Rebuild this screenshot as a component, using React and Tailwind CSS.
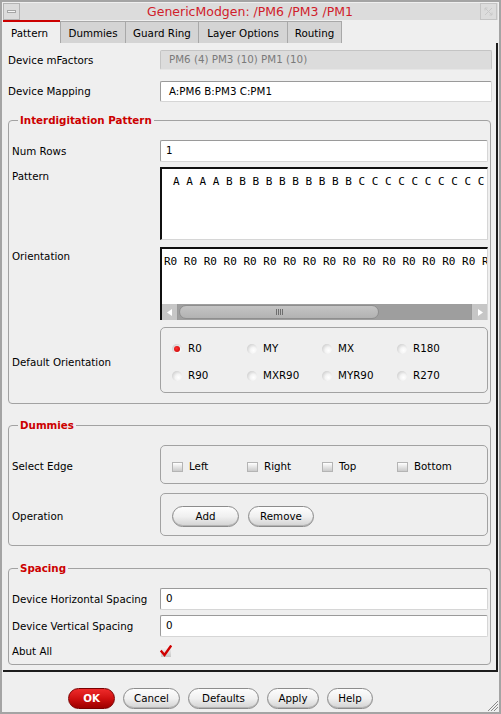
import React from "react";

function Radio({ label, checked }) {
  return (
    <div className="flex items-center gap-[6px] h-[14px]">
      <span className="w-[10px] h-[10px] rounded-full flex items-center justify-center bg-[radial-gradient(circle_at_65%_65%,#ffffff_0%,#f4f4f4_35%,#bdbdbd_100%)]">
        {checked && <span className="w-[6px] h-[6px] rounded-full bg-[radial-gradient(circle_at_40%_40%,#ff3030_0%,#c00000_100%)]" />}
      </span>
      <span>{label}</span>
    </div>
  );
}

function Check({ label }) {
  return (
    <div className="flex items-center gap-[6px] h-[14px]">
      <span className="w-[11px] h-[10px] border border-[#b4b4b4] bg-linear-to-b from-[#ffffff] to-[#cacaca]" />
      <span>{label}</span>
    </div>
  );
}

function Field({ children, w, pl }) {
  return (
    <div className={"h-[22px] bg-white border border-[#9a9a9a] border-r-[#d6d6d6] border-b-[#d6d6d6] rounded-[2px] flex items-center " + w + " " + pl}>
      {children}
    </div>
  );
}

function Btn({ children, w }) {
  return (
    <button className={"h-[21px] rounded-full border border-[#8c8c8c] bg-linear-to-b from-[#fdfdfd] via-[#f0f0f0] to-[#d2d2d2] shadow-[inset_0_-1px_0_#b4b4b4] text-black leading-none " + w}>
      {children}
    </button>
  );
}

export default function App() {
  const orient = Array.from({ length: 16 }, () => "R0").join(" ") + " R";
  const pattern = "A A A A B B B B B B B B B B C C C C C C C C C C";
  return (
    <div className="w-[501px] h-[714px] bg-[#efefef] border-2 border-[#a4a4a4] p-[1px] flex flex-col font-['DejaVu_Sans',sans-serif] text-[10.3px] text-black overflow-hidden">
      {/* Title bar */}
      <div className="h-[17px] flex bg-[#dcdcdc] shrink-0">
        <div className="w-[17px] h-[17px] border border-[#b4b4b4] flex items-center justify-center">
          <div className="w-[9px] h-[3px] bg-[#f6f6f6] border border-[#a6a6a6]" />
        </div>
        <div className="flex-1 text-center text-[12.5px] leading-[17px] text-[#d0202a]">GenericModgen: /PM6 /PM3 /PM1</div>
        <div className="w-[17px] h-[17px] border border-[#c4c4c4] flex items-center justify-center mr-[1px]">
          <svg width="9" height="9" viewBox="0 0 9 9" fill="none" stroke="#c8c8c8" strokeWidth="1">
            <path d="M1 1 L8 8 M8 1 L1 8 M1 1 L3.5 1 M1 1 L1 3.5 M8 8 L5.5 8 M8 8 L8 5.5" />
          </svg>
        </div>
      </div>

      {/* Tabs */}
      <div className="h-[23px] flex items-end shrink-0">
        <div className="w-[57px] h-[23px] border-t-2 border-[#cc0000] bg-[#efefef] pl-[8px] pt-[2px] flex items-center">Pattern</div>
        <div className="w-[66px] h-[22px] bg-[#d4d4d4] border-l border-t border-r border-[#a8a8a8] pt-[2px] flex items-center justify-center">Dummies</div>
        <div className="w-[73px] h-[22px] bg-[#d4d4d4] border-t border-r border-[#a8a8a8] pt-[2px] flex items-center justify-center">Guard Ring</div>
        <div className="w-[89px] h-[22px] bg-[#d4d4d4] border-t border-r border-[#a8a8a8] pt-[2px] flex items-center justify-center">Layer Options</div>
        <div className="w-[54px] h-[22px] bg-[#d4d4d4] border-t border-r border-[#a8a8a8] pt-[2px] flex items-center justify-center">Routing</div>
      </div>

      {/* Content panel */}
      <div className="h-[629px] shrink-0 border-r-2 border-b-2 border-[#1c1c1c] flex flex-col">
        <div className="flex items-center pl-[5px] pr-[3px] mt-[7px]">
          <div className="w-[152px] pt-[1px]">Device mFactors</div>
          <div className="h-[20px] w-[332px] bg-[#dcdcdc] border border-[#c4c4c4] border-b-[#e6e6e6] rounded-[2px] pl-[8px] flex items-center text-[#7a7a7a]">PM6 (4) PM3 (10) PM1 (10)</div>
        </div>
        <div className="flex items-center pl-[5px] pr-[3px] mt-[11px]">
          <div className="w-[152px] pt-[1px]">Device Mapping</div>
          <div className="h-[21px] w-[332px] bg-white border border-[#9a9a9a] border-r-[#d6d6d6] border-b-[#d6d6d6] rounded-[2px] pl-[8px] flex items-center">A:PM6 B:PM3 C:PM1</div>
        </div>

        {/* Interdigitation Pattern */}
        <fieldset className="mx-[5px] mt-[11px] border border-[#a2a2a2] rounded-[4px] pl-[3px] pr-[1px] pb-[10px]">
          <legend className="ml-[6px] px-[2px] leading-[14px] text-[#cc0000] font-bold">Interdigitation Pattern</legend>
          <div className="flex items-center mt-[13px]">
            <div className="w-[148px] pt-[1px]">Num Rows</div>
            <Field w="w-[328px]" pl="pl-[5px]">1</Field>
          </div>
          <div className="flex items-start mt-[5px]">
            <div className="w-[148px] pt-[2px] leading-[14px]">Pattern</div>
            <div className="w-[328px] h-[73px] bg-white border-t-2 border-l-2 border-[#101010] border-r border-b border-r-[#d6d6d6] border-b-[#d6d6d6] pl-[11px] pt-[6px] leading-[14px] font-['DejaVu_Sans_Mono',monospace] text-[11px] whitespace-pre overflow-hidden">{pattern}</div>
          </div>
          <div className="flex items-start mt-[7px]">
            <div className="w-[148px] pt-[2px] leading-[14px]">Orientation</div>
            <div className="w-[328px] h-[73px] bg-white border-t-2 border-l-2 border-[#101010] border-r border-r-[#d6d6d6] flex flex-col">
              <div className="flex-1 pl-[2px] pt-[6px] leading-[14px] font-['DejaVu_Sans_Mono',monospace] text-[11px] whitespace-pre overflow-hidden">{orient}</div>
              <div className="h-[16px] flex bg-[#9e9e9e]">
                <div className="w-[16px] h-[16px] bg-[#c6c6c6] border-r border-[#9a9a9a] flex items-center justify-center">
                  <svg width="6" height="7" viewBox="0 0 6 7"><path d="M5 0 L0 3.5 L5 7 Z" fill="#ffffff" /></svg>
                </div>
                <div className="flex-1 pl-[1px] pt-[1px]">
                  <div className="w-[200px] h-[14px] rounded-[7px] bg-linear-to-b from-[#c4c4c4] to-[#b2b2b2] border border-[#8e8e8e] flex items-center justify-center gap-[1px]">
                    <span className="w-[1px] h-[6px] bg-[#6e6e6e]" />
                    <span className="w-[1px] h-[6px] bg-[#6e6e6e]" />
                    <span className="w-[1px] h-[6px] bg-[#6e6e6e]" />
                    <span className="w-[1px] h-[6px] bg-[#6e6e6e]" />
                  </div>
                </div>
                <div className="w-[16px] h-[16px] bg-[#c6c6c6] border-l border-[#9a9a9a] flex items-center justify-center">
                  <svg width="6" height="7" viewBox="0 0 6 7"><path d="M1 0 L6 3.5 L1 7 Z" fill="#ffffff" /></svg>
                </div>
              </div>
            </div>
          </div>
          <div className="flex items-center mt-[7px]">
            <div className="w-[148px] pt-[6px]">Default Orientation</div>
            <div className="w-[328px] h-[66px] border border-[#a2a2a2] rounded-[5px] pl-[11px] pt-[14px] flex flex-col gap-[13px]">
              <div className="grid grid-cols-[75px_75px_75px_75px]">
                <Radio label="R0" checked />
                <Radio label="MY" />
                <Radio label="MX" />
                <Radio label="R180" />
              </div>
              <div className="grid grid-cols-[75px_75px_75px_75px]">
                <Radio label="R90" />
                <Radio label="MXR90" />
                <Radio label="MYR90" />
                <Radio label="R270" />
              </div>
            </div>
          </div>
        </fieldset>

        {/* Dummies */}
        <fieldset className="mx-[5px] mt-[14px] border border-[#a2a2a2] rounded-[4px] pl-[3px] pr-[1px] pb-[9px]">
          <legend className="ml-[6px] px-[2px] leading-[14px] text-[#cc0000] font-bold">Dummies</legend>
          <div className="flex items-center mt-[13px]">
            <div className="w-[148px] pt-[4px]">Select Edge</div>
            <div className="w-[328px] h-[39px] border border-[#a2a2a2] rounded-[5px] pl-[11px] pt-[4px] grid grid-cols-[75px_75px_75px_75px] items-center">
              <Check label="Left" />
              <Check label="Right" />
              <Check label="Top" />
              <Check label="Bottom" />
            </div>
          </div>
          <div className="flex items-center mt-[9px]">
            <div className="w-[148px] pt-[4px]">Operation</div>
            <div className="w-[328px] h-[43px] border border-[#a2a2a2] rounded-[5px] pl-[11px] pt-[3px] flex items-center gap-[9px]">
              <Btn w="w-[67px]">Add</Btn>
              <Btn w="w-[66px]">Remove</Btn>
            </div>
          </div>
        </fieldset>

        {/* Spacing */}
        <fieldset className="mx-[5px] mt-[15px] border border-[#a2a2a2] rounded-[4px] pl-[3px] pr-[1px] pb-[6px]">
          <legend className="ml-[6px] px-[2px] leading-[14px] text-[#cc0000] font-bold">Spacing</legend>
          <div className="flex items-center mt-[13px]">
            <div className="w-[148px] pt-[1px]">Device Horizontal Spacing</div>
            <Field w="w-[328px]" pl="pl-[5px]">0</Field>
          </div>
          <div className="flex items-center mt-[5px]">
            <div className="w-[148px] pt-[1px]">Device Vertical Spacing</div>
            <Field w="w-[328px]" pl="pl-[5px]">0</Field>
          </div>
          <div className="flex items-center mt-[7px] h-[14px]">
            <div className="w-[148px] pt-[1px]">Abut All</div>
            <div className="relative w-[12px] h-[12px]">
              <span className="absolute left-[1px] top-[2px] w-[10px] h-[10px] bg-linear-to-b from-[#f4f4f4] to-[#c8c8c8]" />
              <svg className="absolute left-0 top-0" width="12" height="12" viewBox="0 0 12 12">
                <path d="M1.5 6.5 L4.5 10 L10.5 1.5" fill="none" stroke="#d00000" strokeWidth="2.4" strokeLinecap="square" />
              </svg>
            </div>
          </div>
        </fieldset>
      </div>

      {/* Button bar */}
      <div className="relative flex-1 flex items-start pt-[16px] pl-[65px] gap-[8px]">
        <button className="h-[21px] w-[47px] rounded-full border border-[#7a0000] bg-linear-to-b from-[#ee2a2a] via-[#d01010] to-[#9c0000] text-white font-bold leading-none">OK</button>
        <Btn w="w-[57px]">Cancel</Btn>
        <Btn w="w-[71px]">Defaults</Btn>
        <Btn w="w-[52px]">Apply</Btn>
        <Btn w="w-[46px]">Help</Btn>
        <svg className="absolute right-0 bottom-0" width="10" height="14" viewBox="0 0 10 14" fill="none" stroke="#8a8a8a" strokeWidth="1">
          <path d="M10 4 L0 14 M10 7 L3 14 M10 10 L6 14" />
        </svg>
      </div>
    </div>
  );
}
